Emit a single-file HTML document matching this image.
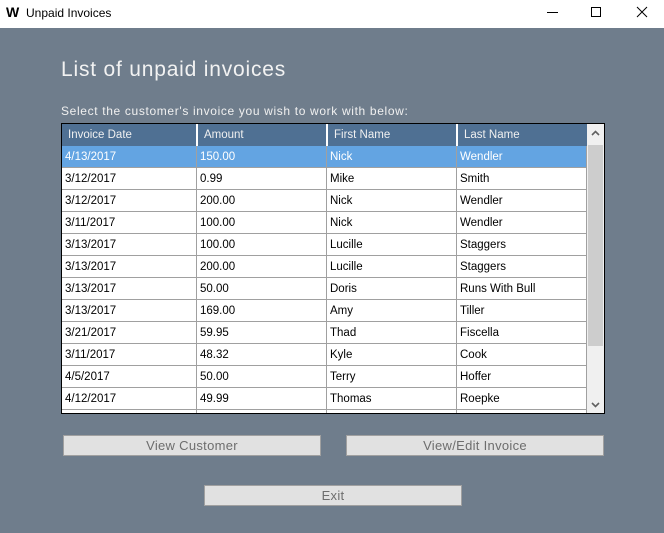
<!DOCTYPE html>
<html><head><style>
*{margin:0;padding:0;box-sizing:border-box}
body{width:664px;height:533px;background:#6f7d8c;position:relative;overflow:hidden;font-family:"Liberation Sans",sans-serif}
.tb{position:absolute;left:0;top:0;width:664px;height:28px;background:#fff}
.tb .t{position:absolute;left:26px;top:6px;font-size:12px;color:#000}
.tb .w{position:absolute;left:6px;top:4px;font-size:14px;font-weight:bold;letter-spacing:-1px}
h1{position:absolute;left:61px;top:58px;font-size:21px;font-weight:normal;color:#f2f2f2;letter-spacing:0.8px}
.lbl{position:absolute;left:61px;top:104px;font-size:12px;color:#f0f0f0;letter-spacing:0.65px}
.grid{position:absolute;left:61px;top:123px;width:544px;height:291px;border:1px solid #000;background:#fff;overflow:hidden}
.hd{position:absolute;left:0;top:0;width:525px;height:22px;background:#4f7093;color:#f0f0f0;font-size:11.5px}
.hd div{position:absolute;top:0;height:22px;line-height:22px;padding-left:6px;border-left:2px solid #fff}
.hd div:first-child{border-left:none}
.row{position:absolute;left:0;width:525px;height:22px;font-size:11.5px;color:#000;border-bottom:1px solid #a0a0a0}
.row div{position:absolute;top:0;height:21px;line-height:23px;padding-left:3px;border-right:1px solid #a0a0a0}
.sel{background:#63a4e2;color:#fff}
.sb{position:absolute;left:525px;top:0;width:17px;height:289px;background:#f0f0f0}
.th{position:absolute;left:1px;top:21px;width:15px;height:201px;background:#cdcdcd}
.btn{position:absolute;height:21px;background:#e1e1e1;border:1px solid #a0a0a0;color:#6d6d6d;font-size:13px;text-align:center;line-height:20px;letter-spacing:0.3px}
</style></head><body>
<div class="tb"><span class="w">W</span><span class="t">Unpaid Invoices</span>
<svg style="position:absolute;left:540px;top:0" width="124" height="28"><path d="M7 12.5h11" stroke="#000" stroke-width="1"/><rect x="51.5" y="7.5" width="9" height="9" fill="none" stroke="#000"/><path d="M97 7l10 10M107 7l-10 10" stroke="#000"/></svg></div>
<h1>List of unpaid invoices</h1>
<div class="lbl">Select the customer's invoice you wish to work with below:</div>
<div class="grid">
<div class="hd"><div style="left:0;width:135px">Invoice Date</div><div style="left:134px;width:131px">Amount</div><div style="left:264px;width:131px">First Name</div><div style="left:394px;width:131px">Last Name</div></div>
<div id="rows"></div>
<div class="sb"><div class="th"></div>
<svg style="position:absolute;left:4px;top:6px" width="9" height="6"><path d="M1 5l3.5-3.5L8 5" stroke="#606060" stroke-width="1.6" fill="none"/></svg>
<svg style="position:absolute;left:4px;top:278px" width="9" height="6"><path d="M1 1l3.5 3.5L8 1" stroke="#606060" stroke-width="1.6" fill="none"/></svg>
</div>
</div>
<div class="btn" style="left:63px;top:435px;width:258px">View Customer</div>
<div class="btn" style="left:346px;top:435px;width:258px">View/Edit Invoice</div>
<div class="btn" style="left:204px;top:485px;width:258px">Exit</div>
<script>
var d=[["4/13/2017","150.00","Nick","Wendler"],["3/12/2017","0.99","Mike","Smith"],["3/12/2017","200.00","Nick","Wendler"],["3/11/2017","100.00","Nick","Wendler"],["3/13/2017","100.00","Lucille","Staggers"],["3/13/2017","200.00","Lucille","Staggers"],["3/13/2017","50.00","Doris","Runs With Bull"],["3/13/2017","169.00","Amy","Tiller"],["3/21/2017","59.95","Thad","Fiscella"],["3/11/2017","48.32","Kyle","Cook"],["4/5/2017","50.00","Terry","Hoffer"],["4/12/2017","49.99","Thomas","Roepke"],["","","",""]];
var h="",L=[0,135,265,395],W=[135,130,130,130];
d.forEach(function(r,i){h+='<div class="row'+(i==0?' sel':'')+'" style="top:'+(22+i*22)+'px">';r.forEach(function(c,j){h+='<div style="left:'+L[j]+'px;width:'+W[j]+'px">'+c+'</div>'});h+='</div>'});
document.getElementById('rows').innerHTML=h;
</script>
</body></html>
